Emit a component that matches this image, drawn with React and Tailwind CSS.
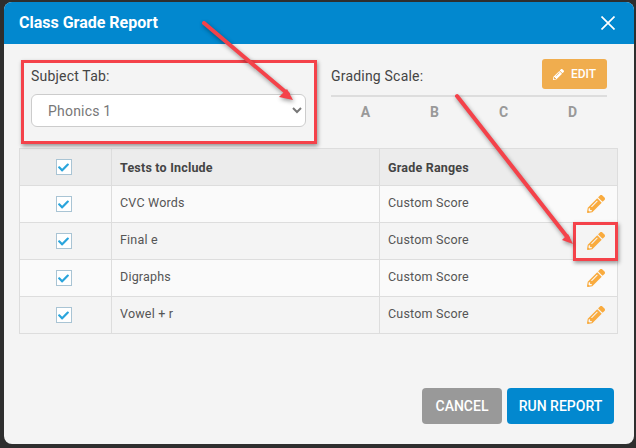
import React from "react";
import { FaCheck, FaPencilAlt } from "react-icons/fa";

const tests = ["CVC Words", "Final e", "Digraphs", "Vowel + r"];

const Checkbox = () => (
  <div className="w-4 h-4 mr-1 bg-white border border-[#a9c4d4] flex items-center justify-center">
    <FaCheck className="text-[#2aa5dc] text-[11px]" />
  </div>
);

const App = () => {
  return (
    <div className="h-[448px] w-[636px] bg-[#2e2e2e] pt-[2px] pl-1 pr-[2px] pb-1 relative overflow-hidden font-['Roboto',sans-serif]">
      <div className="h-[442px] bg-[#f4f4f4] rounded-lg overflow-hidden flex flex-col">
        <div className="h-[42px] shrink-0 bg-[#0288cf] flex items-center justify-between pl-[15px] pr-[19px]">
          <h1 className="text-white text-[16px] font-bold">Class Grade Report</h1>
          <svg width="14" height="14" viewBox="0 0 14 14" stroke="white" strokeWidth="1.7">
            <path d="M0.5 0.5 L13.5 13.5 M13.5 0.5 L0.5 13.5" />
          </svg>
        </div>

        <div className="flex h-[104px] shrink-0">
          <div className="w-[327px] pl-[27px] pr-[25px] pt-[22px]">
            <div className="text-[14px] leading-[20px] text-[#444] tracking-[0.2px]">Subject Tab:</div>
            <select className="mt-[8px] w-[275px] h-[33px] pl-[12px] bg-white border border-[#ccc] rounded-md text-[14px] text-[#777] tracking-[0.2px]">
              <option>Phonics 1</option>
            </select>
          </div>
          <div className="w-[276px]">
            <div className="h-[53px] pt-[15px] flex items-start justify-between border-b-2 border-[#ddd]">
              <div className="text-[14px] leading-[20px] pt-[7px] text-[#444] tracking-[0.2px]">Grading Scale:</div>
              <button className="w-[65px] h-[30px] bg-[#f0ad4e] rounded-[3px] text-white text-[12px] font-medium flex items-center justify-center gap-[7px]">
                <FaPencilAlt className="text-[11px]" />
                EDIT
              </button>
            </div>
            <div className="grid grid-cols-4 pt-[5px] text-[14px] font-bold text-[#999] text-center">
              <div>A</div>
              <div>B</div>
              <div>C</div>
              <div>D</div>
            </div>
          </div>
        </div>

        <div className="ml-[15px] w-[599px] border border-[#ddd] border-b-0 text-[12.5px] text-[#555] tracking-[0.2px]">
          <div className="grid grid-cols-[92px_268px_1fr] h-[37px] bg-[#ececec] border-b border-[#ddd] font-bold text-[#444]">
            <div className="flex items-center justify-center border-r border-[#ddd]"><Checkbox /></div>
            <div className="flex items-center pl-2 pt-[2px] border-r border-[#ddd]">Tests to Include</div>
            <div className="flex items-center pl-2 pt-[2px]">Grade Ranges</div>
          </div>
          {tests.map((name, i) => (
            <div
              key={name}
              className={`grid grid-cols-[92px_268px_1fr] h-[37px] border-b border-[#ddd] ${i % 2 === 0 ? "bg-[#fafafa]" : "bg-[#f4f4f4]"}`}
            >
              <div className="flex items-center justify-center border-r border-[#ddd]"><Checkbox /></div>
              <div className="flex items-center pl-2 pb-[1px] border-r border-[#ddd]">{name}</div>
              <div className="flex items-center justify-between pl-2 pr-[12px] pb-[1px]">
                Custom Score
                <FaPencilAlt className="text-[#f9ab3e] text-[18px]" />
              </div>
            </div>
          ))}
        </div>

        <div className="flex justify-end gap-[5px] pr-5 mt-[54px]">
          <button className="w-20 h-9 bg-[#999] rounded text-white text-[14px] font-medium">CANCEL</button>
          <button className="w-[107px] h-9 bg-[#0288cf] rounded text-white text-[14px] font-medium">RUN REPORT</button>
        </div>
      </div>

      {/* callouts drawn on top of the screenshot */}
      <div className="absolute left-[21px] top-[60px] w-[296px] h-[84px] border-[3px] border-[#f4424a] shadow-[1px_2px_4px_rgba(0,0,0,0.4)]" />
      <div className="absolute left-[573px] top-[222px] w-[45px] h-[39px] border-[3px] border-[#f4424a] shadow-[1px_2px_4px_rgba(0,0,0,0.4)]" />
      <svg className="absolute left-0 top-0 drop-shadow-[1px_2px_2px_rgba(0,0,0,0.4)]" width="636" height="448">
        <line x1="204" y1="23" x2="288" y2="94" stroke="#f4424a" strokeWidth="4" strokeLinecap="round" />
        <polygon points="293,100 279,97 287,89" fill="#f4424a" />
        <line x1="457" y1="96" x2="568" y2="238" stroke="#f4424a" strokeWidth="4" strokeLinecap="round" />
        <polygon points="573,244 562,240 568,234" fill="#f4424a" />
      </svg>
    </div>
  );
};

export default App;
